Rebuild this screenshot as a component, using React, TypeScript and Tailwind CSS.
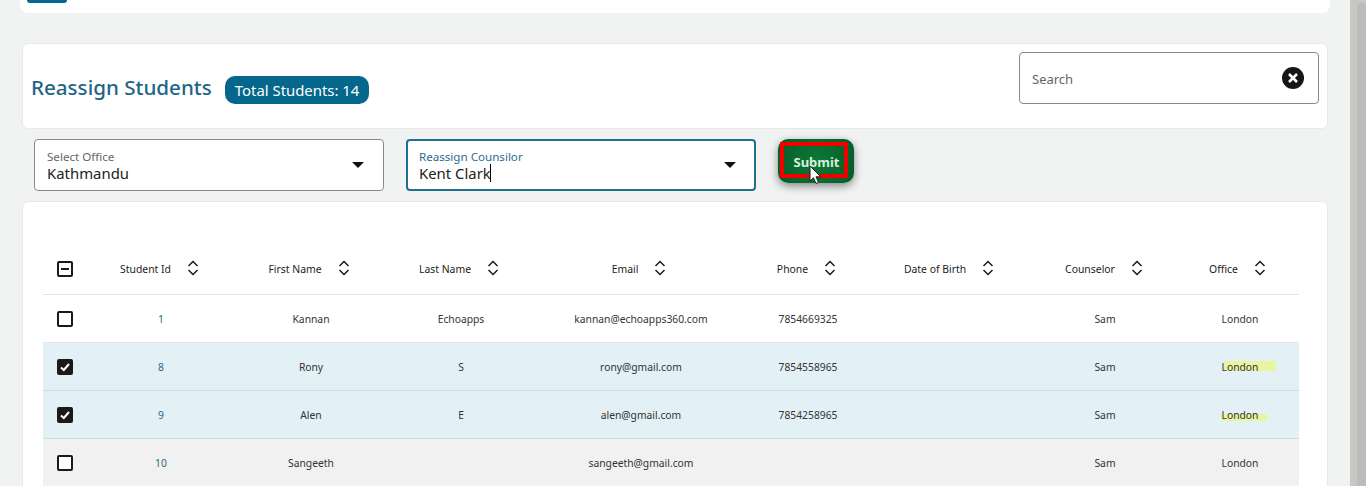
import React from "react";

const cols = "grid grid-cols-[44px_148px_152px_148px_212px_122px_156px_160px_114px]";
const headers: [string, string][] = [
  ["Student Id", "pr-[3px]"],
  ["First Name", "pr-1"],
  ["Last Name", "pr-1"],
  ["Email", "pr-1"],
  ["Phone", "pr-[3px]"],
  ["Date of Birth", "pl-[4px]"],
  ["Counselor", "pr-[2px]"],
  ["Office", "pr-[9px]"],
];

function Sort() {
  return (
    <svg width="12" height="16" viewBox="0 0 12 16" fill="none" stroke="#1a1a1a" strokeWidth="1.5">
      <path d="M1.5 6 6 1.5 10.5 6" />
      <path d="M1.5 10 6 14.5 10.5 10" />
    </svg>
  );
}

function Box({ state }: { state: "none" | "on" | "mixed" }) {
  return (
    <div className={`w-4 h-4 rounded-[2px] border-2 border-[#1a1a1a] flex items-center justify-center ${state === "on" ? "bg-[#1a1a1a]" : "bg-white"}`}>
      {state === "on" && (
        <svg width="12" height="12" viewBox="0 0 12 12" fill="none" stroke="#fff" strokeWidth="2">
          <path d="M2 6.5 4.8 9 10 3" />
        </svg>
      )}
      {state === "mixed" && <div className="w-2 h-0.5 bg-[#1a1a1a]" />}
    </div>
  );
}

function Select({ label, value, focus }: { label: string; value: string; focus?: boolean }) {
  return (
    <div className={`w-[350px] h-[52px] rounded bg-white flex items-center justify-between ${focus ? "border-2 border-[#206f8e] pl-[11px] pr-[18px]" : "border border-[#8a8a8a] pl-3 pr-[19px]"}`}>
      <div className="flex flex-col mt-[2px]">
        <span className={`text-[11.6px] leading-[14px] ${focus ? "text-[#2b6c8c]" : "text-[#666]"}`}>{label}</span>
        <span className="text-[14.9px] leading-[19px] text-[#222] flex items-center">
          {value}
          {focus && <span className="w-px h-[18px] bg-black -ml-px" />}
        </span>
      </div>
      <div className="w-0 h-0 border-l-[6px] border-r-[6px] border-t-[6px] border-l-transparent border-r-transparent border-t-[#111]" />
    </div>
  );
}

type Row = {
  id: string; first: string; last: string; email: string; phone: string; bg: string; on: boolean;
  mark?: string;
};
const rows: Row[] = [
  { id: "1", first: "Kannan", last: "Echoapps", email: "kannan@echoapps360.com", phone: "7854669325", bg: "bg-white border-[#e3e6e8]", on: false },
  { id: "8", first: "Rony", last: "S", email: "rony@gmail.com", phone: "7854558965", bg: "bg-[#e3f0f6] border-[#cfdbe2]", on: true, mark: "left-[39px] top-[18px] w-[52px] h-[10px]" },
  { id: "9", first: "Alen", last: "E", email: "alen@gmail.com", phone: "7854258965", bg: "bg-[#e3f0f6] border-[#cfdbe2]", on: true, mark: "left-[36px] top-[23px] w-[46px] h-[7px]" },
  { id: "10", first: "Sangeeth", last: "", email: "sangeeth@gmail.com", phone: "", bg: "bg-[#f1f1f1] border-[#dde0e2]", on: false },
];

export default function App() {
  return (
    <div className="flex h-[486px] overflow-hidden bg-[#f1f3f3] text-[#222]" style={{ fontFamily: '"Noto Sans", sans-serif' }}>
      <main className="w-[1350px] flex flex-col">
        <div className="shrink-0 ml-5 w-[1310px] h-[13px] bg-white rounded-b-lg pl-[7px]">
          <div className="w-10 h-[3px] bg-[#04678b] rounded-b-md" />
        </div>

        <section className="shrink-0 ml-[22px] mt-[30px] w-[1306px] h-[86px] bg-white border border-[#e8eaea] rounded-md flex items-start justify-between pl-2 pr-2">
          <div className="flex items-start gap-[13px] mt-[29px]">
            <h1 className="text-[20.6px] leading-7 font-medium text-[#1e6685]">Reassign Students</h1>
            <span className="h-7 px-[10px] rounded-[10px] bg-[#04678b] text-white text-[14.9px] leading-7 mt-[3px]">Total Students: 14</span>
          </div>
          <div className="w-[300px] h-[52px] mt-2 rounded border border-[#8a8a8a] bg-white flex items-center justify-between pl-3 pr-[14px]">
            <span className="text-[13px] text-[#666] pt-1">Search</span>
            <div className="w-[22px] h-[22px] rounded-full bg-[#161616] flex items-center justify-center">
              <svg width="12" height="12" viewBox="0 0 12 12" stroke="#fff" strokeWidth="2.6">
                <path d="M2 2 10 10M10 2 2 10" />
              </svg>
            </div>
          </div>
        </section>

        <div className="shrink-0 ml-[34px] mt-[10px] h-[52px] flex items-start gap-[22px]">
          <Select label="Select Office" value="Kathmandu" />
          <Select label="Reassign Counsilor" value="Kent Clark" focus />
          <div className="relative">
            <button className="w-[76px] h-11 rounded-[10px] bg-[radial-gradient(circle,#0a7a35_0%,#075a29_100%)] shadow-[0_3px_8px_rgba(0,0,0,0.45)] flex items-start justify-center pt-[3px] pr-1">
              <span className="w-[68px] h-[36px] border-4 border-[#f10000] flex items-center justify-center pt-[5px] pl-[5px] text-[13px] font-bold text-[#d8efdc]">Submit</span>
            </button>
            <svg className="absolute left-[31px] top-[26px]" width="13" height="20" viewBox="0 0 13 20">
              <path d="M1 1V16L4.5 12.8 7 18.5 9.5 17.4 7 11.8H11.8Z" fill="#fff" stroke="#222" strokeWidth="1" />
            </svg>
          </div>
        </div>

        <section className="shrink-0 ml-[22px] mt-[10px] w-[1306px] bg-white border border-[#e8eaea] border-b-0 rounded-t-md pl-5 pr-7 pt-[41px]">
          <div className={`${cols} h-[52px] items-center border-b border-[#e3e6e8] text-[10.4px] text-[#222]`}>
            <div className="flex justify-center"><Box state="mixed" /></div>
            {headers.map(([h, extra]) => (
              <div key={h} className={`flex items-center justify-center gap-4 ${extra}`}>
                <span className="pt-[3px]">{h}</span>
                <Sort />
              </div>
            ))}
          </div>
          {rows.map((r) => (
            <div key={r.id} className={`${cols} h-12 items-center border-b text-[10.3px] text-center text-[#333] ${r.bg}`}>
              <div className="flex justify-center"><Box state={r.on ? "on" : "none"} /></div>
              <div className="text-[#2a6a88] pt-[3px]">{r.id}</div>
              <div className="pt-[3px]">{r.first}</div>
              <div className="pt-[3px]">{r.last}</div>
              <div className="pt-[3px]">{r.email}</div>
              <div className="pt-[3px]">{r.phone}</div>
              <div />
              <div className="pt-[3px]">Sam</div>
              <div className="relative h-full flex items-center justify-center pr-1 pt-[3px]">
                {r.mark && <div className={`absolute bg-[#e9f5a0] ${r.mark}`} />}
                <span className="relative">London</span>
              </div>
            </div>
          ))}
        </section>
      </main>
      <div className="w-4 bg-[#c8c7c3] flex justify-end">
        <div className="w-[9px] h-full mt-[3px] rounded-t bg-[#bdbcb8]" />
      </div>
    </div>
  );
}
